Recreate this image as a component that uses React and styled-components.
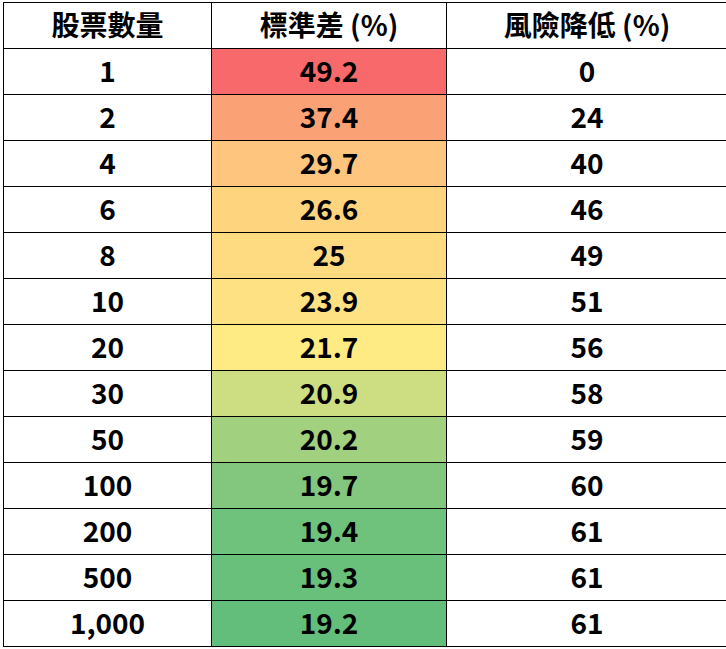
import React from "react"
import styled, { createGlobalStyle } from "styled-components"

const rows = [
    ["1", "49.2", "0", "#F8696B"],
    ["2", "37.4", "24", "#FBA176"],
    ["4", "29.7", "40", "#FDC57D"],
    ["6", "26.6", "46", "#FED47F"],
    ["8", "25", "49", "#FEDB81"],
    ["10", "23.9", "51", "#FEE182"],
    ["20", "21.7", "56", "#FFEB84"],
    ["30", "20.9", "58", "#CDDD81"],
    ["50", "20.2", "59", "#A1D07F"],
    ["100", "19.7", "60", "#82C77D"],
    ["200", "19.4", "61", "#6FC27C"],
    ["500", "19.3", "61", "#69C07B"],
    ["1,000", "19.2", "61", "#63BE7B"],
]

const Global = createGlobalStyle`
body {
    margin: 0;
    background: #FFFFFF;
    font-family: "Noto Sans CJK TC", "Noto Sans", sans-serif;
}
`

export default function App() {
    return (
        <Pagina>
            <Global />
            <Tabela>
                <colgroup>
                    <col style={{ width: 208 }} />
                    <col style={{ width: 235 }} />
                    <col />
                </colgroup>
                <thead>
                    <tr>
                        <Titulo>股票數量</Titulo>
                        <Titulo>標準差 (%)</Titulo>
                        <Titulo>風險降低 (%)</Titulo>
                    </tr>
                </thead>
                <tbody>
                    {rows.map(([qtd, desvio, reducao, cor]) => (
                        <tr key={qtd}>
                            <Celula>{qtd}</Celula>
                            <Celula fundo={cor}>{desvio}</Celula>
                            <Celula>{reducao}</Celula>
                        </tr>
                    ))}
                </tbody>
            </Tabela>
        </Pagina>
    )
}

const Pagina = styled.div`
padding: 2px 0 0 3px;
width: 726px;
height: 649px;
overflow: hidden;
box-sizing: border-box;
`

const Tabela = styled.table`
border-collapse: collapse;
table-layout: fixed;
width: 725px;
color: #000000;
`

const Titulo = styled.th`
height: 41px;
padding: 0 0 4px;
border: 1.5px solid #000000;
font-size: 28px;
font-weight: 700;
text-align: center;
vertical-align: middle;
line-height: 1;
`

const Celula = styled.td`
height: 41px;
padding: 0 0 4px;
border: 1.5px solid #000000;
background-color: ${props => props.fundo || "#FFFFFF"};
font-size: 28px;
font-weight: 700;
text-align: center;
vertical-align: middle;
line-height: 1;
`
